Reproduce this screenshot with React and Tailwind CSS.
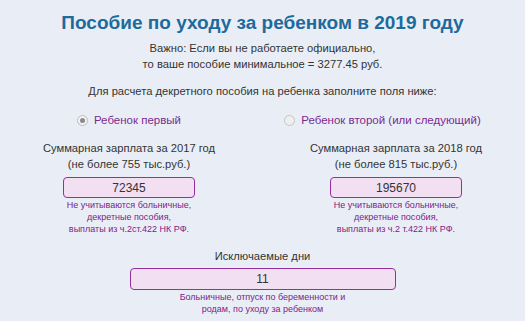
export default function App() {
  return (
    <div className="min-h-screen w-full bg-[#e9eef6] overflow-hidden text-[#333]" style={{ fontFamily: '"Liberation Sans", Arial, sans-serif' }}>
      {/* Header */}
      <h1 className="pt-[8px] text-center text-[19px] leading-[30px] font-bold text-[#1d6a9c]">
        Пособие по уходу за ребенком в 2019 году
      </h1>
      <div className="mt-[2px] text-center text-[11.2px] leading-[16px]">
        <p>Важно: Если вы не работаете официально,</p>
        <p>то ваше пособие минимальное = 3277.45 руб.</p>
      </div>
      <p className="mt-[11px] text-center text-[11.2px] leading-[16px]">
        Для расчета декретного пособия на ребенка заполните поля ниже:
      </p>

      {/* Two columns */}
      <div className="mt-[13px] grid grid-cols-[267px_267px] justify-center">
        <div className="flex flex-col items-center">
          <label className="flex items-center gap-[6px] text-[11.5px] leading-[16px] text-[#7b2a90]">
            <span className="flex h-[11px] w-[11px] items-center justify-center rounded-full border border-[#bdbdbd] bg-[#f3f3f3]">
              <span className="h-[5px] w-[5px] rounded-full bg-[#8a8a8a]" />
            </span>
            Ребенок первый
          </label>
          <div className="mt-[12px] text-center text-[11.2px] leading-[16px]">
            <p>Суммарная зарплата за 2017 год</p>
            <p>(не более 755 тыс.руб.)</p>
          </div>
          <div className="mt-[5px] flex h-[21px] w-[132px] items-center justify-center rounded-[4px] border border-[#96309f] bg-[#f2e0f2] text-[12px]">
            72345
          </div>
          <div className="mt-[1px] text-center text-[9px] leading-[12px] text-[#7d2288]">
            <p>Не учитываются больничные,</p>
            <p>декретные пособия,</p>
            <p>выплаты из ч.2ст.422 НК РФ.</p>
          </div>
        </div>

        <div className="flex flex-col items-center">
          <label className="mr-[27px] flex items-center gap-[6px] text-[11.5px] leading-[16px] text-[#7b2a90]">
            <span className="h-[11px] w-[11px] rounded-full border border-[#c4c4c4] bg-[#efefef]" />
            Ребенок второй (или следующий)
          </label>
          <div className="mt-[12px] text-center text-[11.2px] leading-[16px]">
            <p>Суммарная зарплата за 2018 год</p>
            <p>(не более 815 тыс.руб.)</p>
          </div>
          <div className="mt-[5px] flex h-[21px] w-[132px] items-center justify-center rounded-[4px] border border-[#96309f] bg-[#f2e0f2] text-[12px]">
            195670
          </div>
          <div className="mt-[1px] text-center text-[9px] leading-[12px] text-[#7d2288]">
            <p>Не учитываются больничные,</p>
            <p>декретные пособия,</p>
            <p>выплаты из ч.2 т.422 НК РФ.</p>
          </div>
        </div>
      </div>

      {/* Excluded days */}
      <div className="mt-[13px] flex flex-col items-center">
        <p className="text-center text-[11.2px] leading-[16px]">Исключаемые дни</p>
        <div className="mt-[4px] flex h-[22px] w-[266px] items-center justify-center rounded-[4px] border border-[#96309f] bg-[#f2e0f2] text-[12px]">
          11
        </div>
        <div className="mt-[1px] text-center text-[9px] leading-[12px] text-[#7d2288]">
          <p>Больничные, отпуск по беременности и</p>
          <p>родам, по уходу за ребенком</p>
        </div>
      </div>
    </div>
  );
}
